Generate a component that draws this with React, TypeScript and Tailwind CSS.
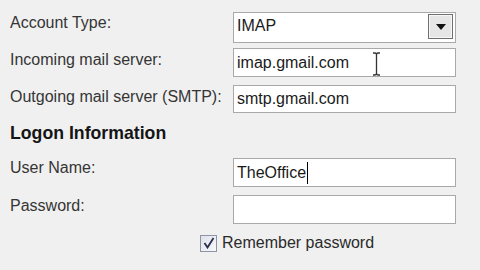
import React from "react";

function Field({ children, h = 29 }: { children?: React.ReactNode; h?: number }) {
  return (
    <div
      className="relative w-[223px] border border-[#a9a9a9] bg-white flex items-center pl-[3px] text-[#1a1a1a]"
      style={{ height: h }}
    >
      {children}
    </div>
  );
}

export default function App() {
  return (
    <div className="w-[480px] h-[270px] overflow-hidden bg-[#f0f0f0] pt-[12px] text-[16px] leading-[18px] text-[#353535] font-['Liberation_Sans',Arial,sans-serif]">
      {/* Account Type */}
      <div className="flex h-[31px]">
        <div className="w-[233px] pl-[10px] pt-[2px]">Account Type:</div>
        <div className="relative w-[223px] h-[31px] border border-[#a9a9a9] bg-white flex items-center pl-[3px] pb-[4px] text-[#1a1a1a]">
          <span>IMAP</span>
          <div className="absolute right-[2px] top-[1px] w-[25px] h-[25px] border border-[#6f6f6f] bg-[#e6e6e6] flex items-center justify-center shadow-[inset_0_0_0_1px_#f7f7f7]">
            <svg width="10" height="6" viewBox="0 0 10 6">
              <path d="M0 0 H10 L5 6 Z" fill="#111" />
            </svg>
          </div>
        </div>
      </div>

      {/* Incoming */}
      <div className="flex mt-[5px] h-[29px]">
        <div className="w-[233px] pl-[10px] pt-[3px]">Incoming mail server:</div>
        <Field>
          <span>imap.gmail.com</span>
          <svg className="absolute left-[138px] top-[3px]" width="9" height="24" viewBox="0 0 9 24">
            <path d="M1 1 H3 Q4.5 1 4.5 3 V21 Q4.5 23 3 23 H1 M8 1 H6 Q4.5 1 4.5 3 M4.5 21 Q4.5 23 6 23 H8" stroke="#333" strokeWidth="1.3" fill="none" />
          </svg>
        </Field>
      </div>

      {/* Outgoing */}
      <div className="flex mt-[8px] h-[28px]">
        <div className="w-[233px] pl-[10px] pt-[3px]">Outgoing mail server (SMTP):</div>
        <Field h={28}>
          <span>smtp.gmail.com</span>
        </Field>
      </div>

      {/* Logon Information */}
      <div className="mt-[10px] pl-[10px] h-[20px] leading-[20px] text-[17.7px] font-bold text-[#151515]">
        Logon Information
      </div>

      {/* User Name */}
      <div className="flex mt-[15px] h-[29px]">
        <div className="w-[233px] pl-[10px] pt-[1px]">User Name:</div>
        <Field>
          <span>TheOffice</span>
          <span className="inline-block w-[1px] h-[22px] bg-black ml-[1px]" />
        </Field>
      </div>

      {/* Password */}
      <div className="flex mt-[8px] h-[29px]">
        <div className="w-[233px] pl-[10px] pt-[2px]">Password:</div>
        <Field />
      </div>

      {/* Remember password */}
      <div className="flex items-center mt-[10px] pl-[200px] h-[18px]">
        <div className="w-[17px] h-[17px] border border-[#8e93a8] bg-gradient-to-br from-[#dfe2ea] to-[#f7f8fb] flex items-center justify-center">
          <svg width="12" height="12" viewBox="0 0 12 12">
            <path d="M1.5 6 L4.5 10.5 L10.5 1" stroke="#25304f" strokeWidth="1.8" fill="none" />
          </svg>
        </div>
        <span className="ml-[5px] text-[#2a2a2a]">Remember password</span>
      </div>
    </div>
  );
}
